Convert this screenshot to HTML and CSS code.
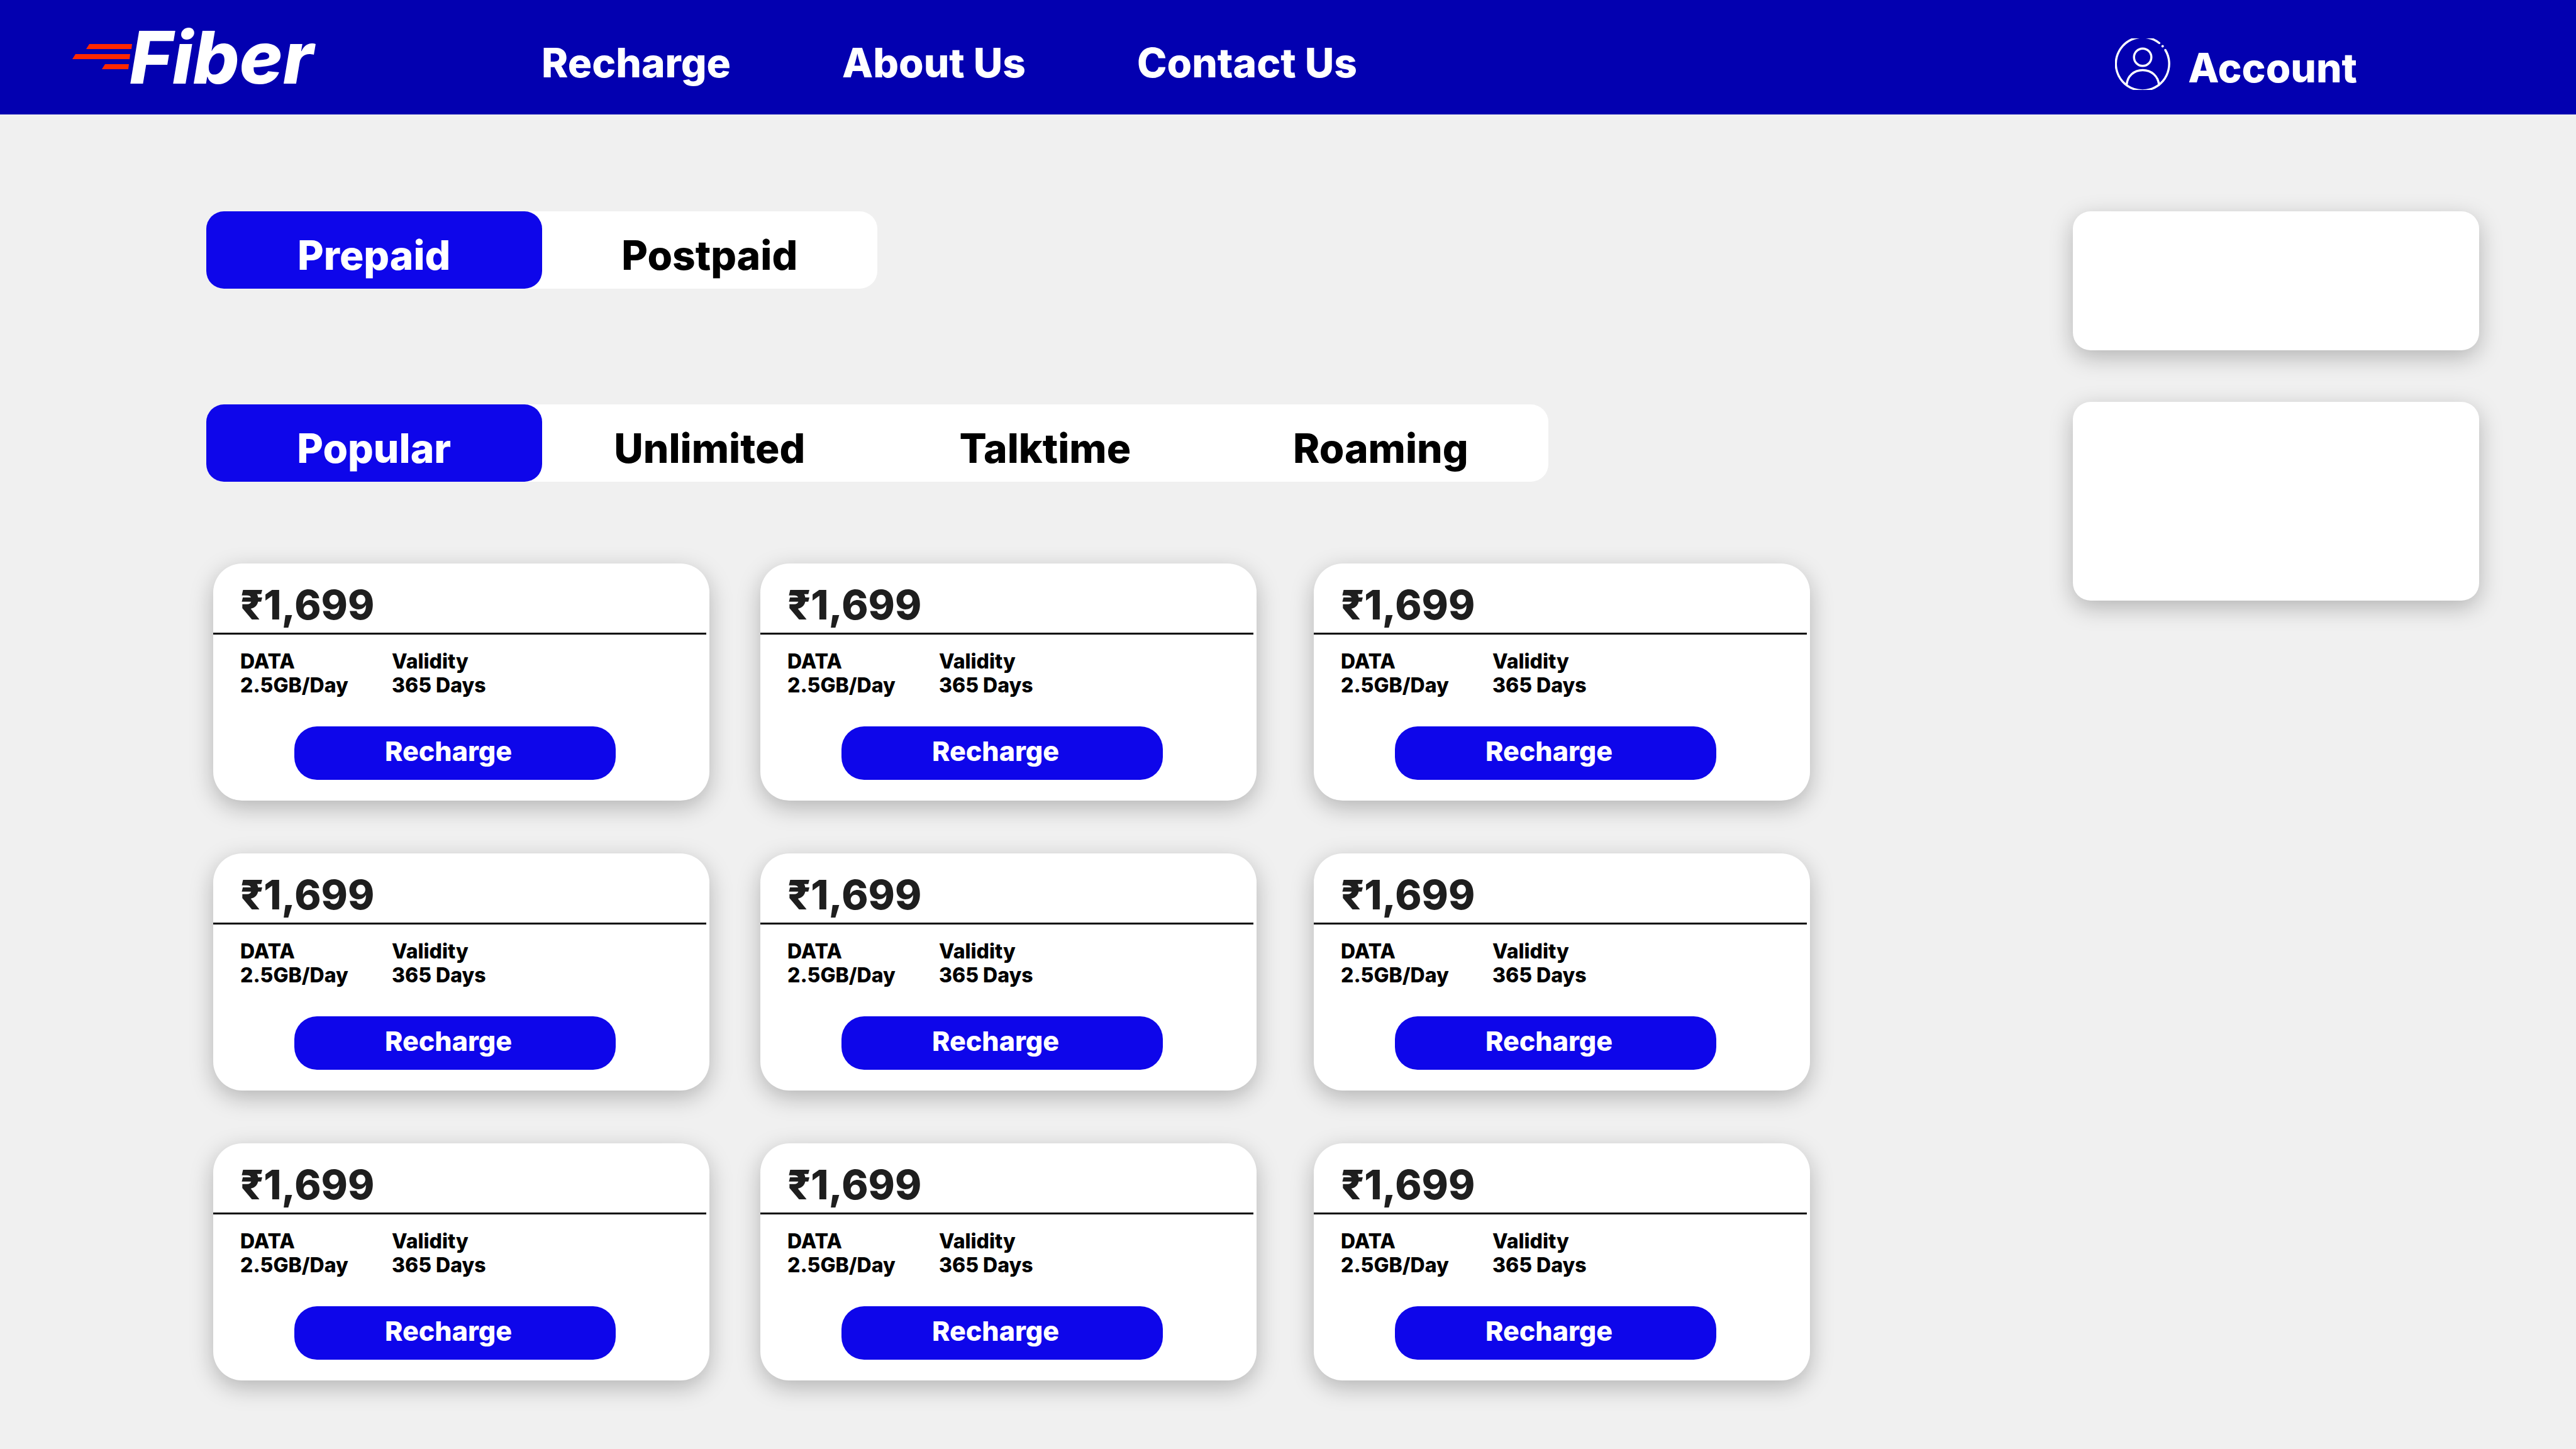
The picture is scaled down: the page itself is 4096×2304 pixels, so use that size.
FILE: index.html
```html
<!DOCTYPE html>
<html lang="en">
<head>
<meta charset="utf-8">
<title>Fiber – Recharge</title>
<link rel="stylesheet" href="styles.css">
</head>
<body>
<header class="topbar">
  <a class="logo" href="#">
    <svg class="logo-lines" viewBox="0 0 95 41" aria-hidden="true">
      <path d="M27 0H95L94 8H22ZM5 16H92L91 24H0ZM52 32H90L89 40H47Z"/>
    </svg>
    <span class="logo-name">Fiber</span>
  </a>
  <nav class="nav">
    <a href="#">Recharge</a>
    <a href="#">About Us</a>
    <a href="#">Contact Us</a>
  </nav>
  <a class="account" href="#">
    <svg class="account-icon" viewBox="0 0 88 82" aria-hidden="true">
      <path d="M80 18.500A42.400 42.400 0 1 1 70.400 7.500"/>
      <circle cx="44" cy="30" r="13.800"/>
      <path d="M18.500 74C19.500 60 30 50.500 44 50.500S68.500 60 70 74"/>
      <circle class="dot" cx="75.700" cy="12.400" r="2"/>
    </svg>
    <span>Account</span>
  </a>
</header>
<main class="page">
  <div class="content">
    <div class="tabs tabs-type">
      <button class="tab active" type="button">Prepaid</button>
      <button class="tab" type="button">Postpaid</button>
    </div>
    <div class="tabs tabs-plan">
      <button class="tab active" type="button">Popular</button>
      <button class="tab" type="button">Unlimited</button>
      <button class="tab" type="button">Talktime</button>
      <button class="tab" type="button">Roaming</button>
    </div>
    <section class="plans">
      <article class="plan">
        <h2 class="price">₹1,699</h2>
        <dl class="facts"><div><dt>DATA</dt><dd>2.5GB/Day</dd></div><div><dt>Validity</dt><dd>365 Days</dd></div></dl>
        <button class="buy" type="button">Recharge</button>
      </article>
      <article class="plan">
        <h2 class="price">₹1,699</h2>
        <dl class="facts"><div><dt>DATA</dt><dd>2.5GB/Day</dd></div><div><dt>Validity</dt><dd>365 Days</dd></div></dl>
        <button class="buy" type="button">Recharge</button>
      </article>
      <article class="plan">
        <h2 class="price">₹1,699</h2>
        <dl class="facts"><div><dt>DATA</dt><dd>2.5GB/Day</dd></div><div><dt>Validity</dt><dd>365 Days</dd></div></dl>
        <button class="buy" type="button">Recharge</button>
      </article>
      <article class="plan">
        <h2 class="price">₹1,699</h2>
        <dl class="facts"><div><dt>DATA</dt><dd>2.5GB/Day</dd></div><div><dt>Validity</dt><dd>365 Days</dd></div></dl>
        <button class="buy" type="button">Recharge</button>
      </article>
      <article class="plan">
        <h2 class="price">₹1,699</h2>
        <dl class="facts"><div><dt>DATA</dt><dd>2.5GB/Day</dd></div><div><dt>Validity</dt><dd>365 Days</dd></div></dl>
        <button class="buy" type="button">Recharge</button>
      </article>
      <article class="plan">
        <h2 class="price">₹1,699</h2>
        <dl class="facts"><div><dt>DATA</dt><dd>2.5GB/Day</dd></div><div><dt>Validity</dt><dd>365 Days</dd></div></dl>
        <button class="buy" type="button">Recharge</button>
      </article>
      <article class="plan">
        <h2 class="price">₹1,699</h2>
        <dl class="facts"><div><dt>DATA</dt><dd>2.5GB/Day</dd></div><div><dt>Validity</dt><dd>365 Days</dd></div></dl>
        <button class="buy" type="button">Recharge</button>
      </article>
      <article class="plan">
        <h2 class="price">₹1,699</h2>
        <dl class="facts"><div><dt>DATA</dt><dd>2.5GB/Day</dd></div><div><dt>Validity</dt><dd>365 Days</dd></div></dl>
        <button class="buy" type="button">Recharge</button>
      </article>
      <article class="plan">
        <h2 class="price">₹1,699</h2>
        <dl class="facts"><div><dt>DATA</dt><dd>2.5GB/Day</dd></div><div><dt>Validity</dt><dd>365 Days</dd></div></dl>
        <button class="buy" type="button">Recharge</button>
      </article>
    </section>
  </div>
  <aside class="side">
    <div class="panel"></div>
    <div class="panel panel-tall"></div>
  </aside>
</main>
</body>
</html>
```
FILE: styles.css
```css
* {
  box-sizing: border-box;
}

body {
  margin: 0;
  min-height: 100vh;
  background: #f0f0f0;
  color: #000;
  font-family: Inter, "Liberation Sans", sans-serif;
  font-weight: 800;
}

a {
  color: inherit;
  text-decoration: none;
}

button {
  margin: 0;
  padding: 0;
  border: 0;
  font: inherit;
  color: inherit;
  background: none;
}

/* Top bar */
.topbar {
  display: flex;
  align-items: flex-start;
  height: 182px;
  padding: 0 348px 0 115px;
  background: #0300b0;
  color: #fff;
  font-size: 64px;
  line-height: 78px;
}

.logo {
  display: flex;
  width: 746px;
  padding-top: 17px;
}

.logo-lines {
  flex: none;
  width: 95px;
  height: 41px;
  margin-top: 53px;
  fill: #ff2800;
}

.logo-name {
  margin-left: -4px;
  font-size: 116px;
  font-style: italic;
  line-height: 148px;
}

.nav {
  display: flex;
  gap: 177px;
  padding-top: 61px;
}

.account {
  display: flex;
  gap: 28px;
  margin-left: auto;
  padding-top: 61px;
}

.account-icon {
  width: 88px;
  height: 82px;
  fill: none;
  stroke: #fff;
  stroke-width: 3.4;
  stroke-linecap: round;
}

.account-icon .dot {
  fill: #fff;
  stroke: none;
}

.account span {
  padding-top: 8px;
}

/* Page body */
.page {
  display: flex;
  justify-content: space-between;
  padding: 154px 154px 108px 328px;
}

.content {
  width: 2550px;
}

.tabs {
  display: flex;
  border-radius: 28px;
  background: #fff;
}

.tabs-type {
  width: 1067px;
}

.tabs-plan {
  width: 2134px;
  margin-top: 184px;
}

.tab {
  flex: 1;
  height: 123px;
  padding-top: 16px;
  border-radius: 28px;
  font-size: 64px;
  line-height: 78px;
}

.tab.active {
  background: #0e06ea;
  color: #fff;
}

/* Plan cards */
.plans {
  display: grid;
  grid-template-columns: 870fr 880fr 789fr;
  row-gap: 84px;
  margin: 130px 0 0 11px;
}

.plan {
  display: flex;
  flex-direction: column;
  width: 789px;
  height: 377px;
  border-radius: 46px;
  background: #fff;
  box-shadow: 0 11px 36px rgba(0, 0, 0, 0.25);
}

.price {
  margin: 0 5px 0 0;
  padding: 27px 0 5px 43px;
  border-bottom: 3px solid #000;
  color: #1e1e1e;
  font-size: 64px;
  font-weight: 800;
  line-height: 78px;
}

.facts {
  display: flex;
  margin: 24px 0 0 43px;
  font-size: 32px;
  line-height: 38px;
}

.facts div {
  width: 241px;
}

.facts dd {
  margin: 0;
}

.buy {
  width: 511px;
  height: 85px;
  margin: 46px 0 0 129px;
  padding: 0 21px 8px 0;
  border-radius: 36px;
  background: #0e06ea;
  color: #fff;
  font-size: 43px;
}

/* Side panels */
.side {
  display: flex;
  flex-direction: column;
  gap: 82px;
  width: 646px;
}

.panel {
  height: 221px;
  border-radius: 28px;
  background: #fff;
  box-shadow: 0 11px 36px rgba(0, 0, 0, 0.25);
}

.panel-tall {
  height: 316px;
}
```
